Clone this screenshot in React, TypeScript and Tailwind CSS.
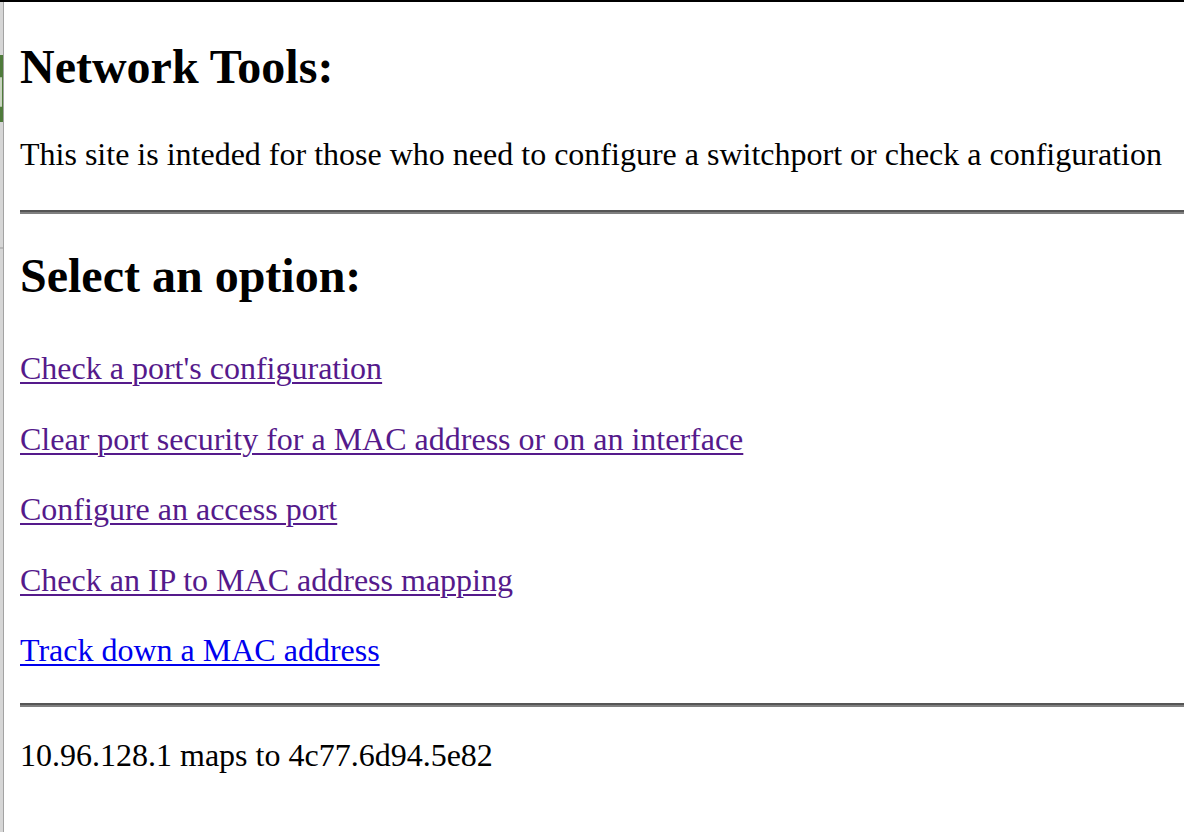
const links = [
  { label: "Check a port's configuration", visited: true },
  { label: 'Clear port security for a MAC address or on an interface', visited: true },
  { label: 'Configure an access port', visited: true },
  { label: 'Check an IP to MAC address mapping', visited: true },
  { label: 'Track down a MAC address', visited: false },
];

function Rule() {
  return (
    <div className="flex flex-col">
      <div className="h-[2px] bg-[#555555]" />
      <div className="h-[2px] bg-[#808080]" />
    </div>
  );
}

function SideStrip() {
  return (
    <div className="w-[4px] shrink-0 bg-[#d6d6d6] border-r border-[#a3a3a3] flex flex-col">
      <div className="mt-[53px] h-[67px] bg-[#4f7b3b] flex flex-col">
        <div className="mt-[22px] h-[30px] w-[2px] rounded-full bg-[#c9d5c0]" />
      </div>
      <div className="mt-[125px] h-[2px] bg-[#b8b8b8]" />
    </div>
  );
}

export default function App() {
  return (
    <div className="min-h-[832px] w-full bg-white flex flex-col font-['Liberation_Serif','Times_New_Roman',serif] text-black">
      <div className="h-[2px] bg-black shrink-0" />
      <div className="flex flex-1">
        <SideStrip />
        <main className="flex-1 pl-[16px]">
          <h2 className="mt-[37px] text-[48px] leading-[55px] font-bold">Network Tools:</h2>
          <p className="mt-[42px] text-[32px] leading-[37px] whitespace-nowrap">
            This site is inteded for those who need to configure a switchport or check a configuration
          </p>
          <div className="mt-[37px]">
            <Rule />
          </div>
          <h2 className="mt-[34px] text-[48px] leading-[55px] font-bold">Select an option:</h2>
          <div className="mt-[47px] flex flex-col gap-[33.5px]">
            {links.map((l) => (
              <p key={l.label} className="text-[32px] leading-[37px]">
                <a
                  href="#"
                  className={`underline decoration-2 underline-offset-[3px] ${
                    l.visited ? 'text-[#551a8b]' : 'text-[#0000ee]'
                  }`}
                >
                  {l.label}
                </a>
              </p>
            ))}
          </div>
          <div className="mt-[34px]">
            <Rule />
          </div>
          <p className="mt-[30px] text-[32px] leading-[37px]">10.96.128.1 maps to 4c77.6d94.5e82</p>
        </main>
      </div>
    </div>
  );
}
